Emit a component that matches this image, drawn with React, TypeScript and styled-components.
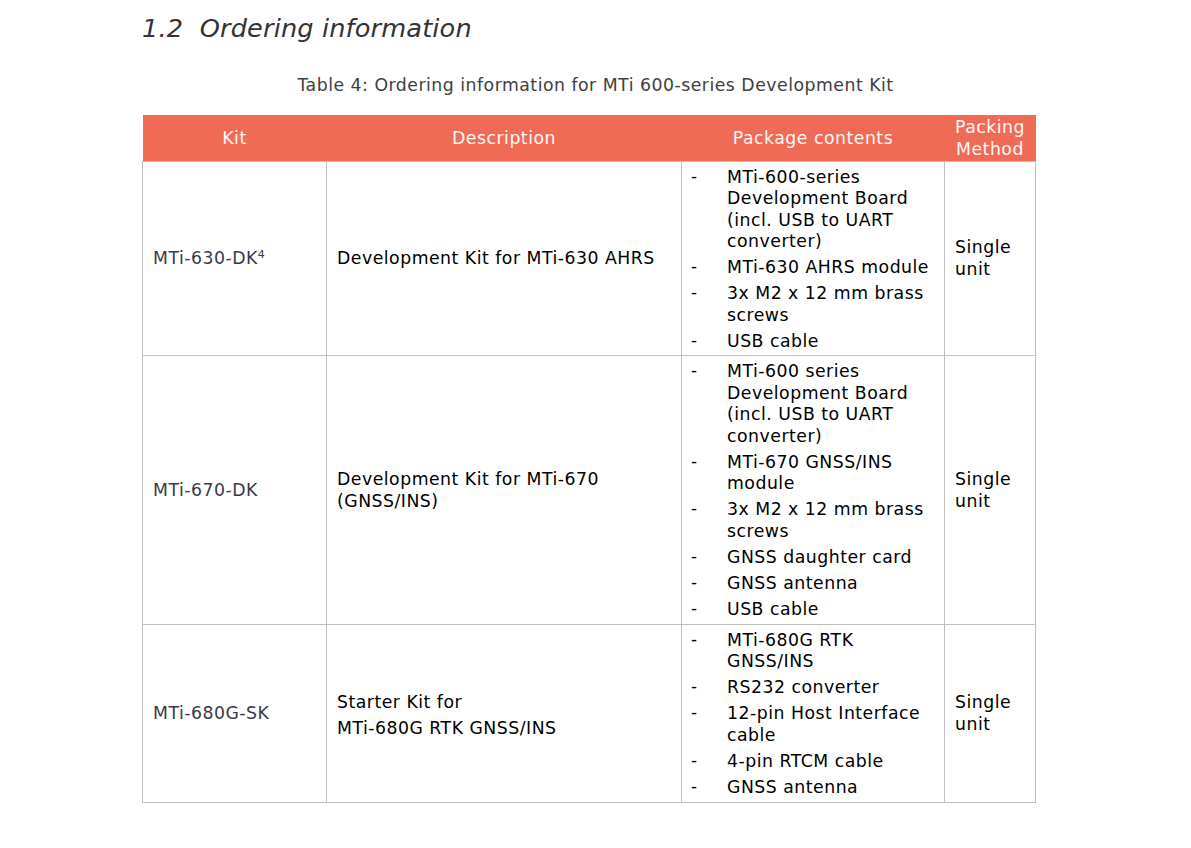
import React from "react";
import styled, { createGlobalStyle } from "styled-components";

const Global = createGlobalStyle`
  html, body { margin: 0; padding: 0; background: #ffffff; }
  body { font-family: "DejaVu Sans", Verdana, sans-serif; color: #000; }
`;

const Page = styled.div`
  width: 1191px;
  height: 848px;
  box-sizing: border-box;
  padding: 10px 0 0 142px;
  display: flex;
  flex-direction: column;
`;

const Heading = styled.h2`
  margin: 0;
  font-family: "DejaVu Sans", Verdana, sans-serif;
  font-style: italic;
  font-weight: normal;
  font-size: 25.6px;
  line-height: 36px;
  color: #333333;
  letter-spacing: 0.15px;
`;

const Caption = styled.div`
  width: 893px;
  margin-top: 28px;
  padding-left: 14px;
  box-sizing: border-box;
  text-align: center;
  font-size: 17.3px;
  letter-spacing: 0.5px;
  line-height: 22px;
  color: #404040;
`;

const Table = styled.table`
  margin-top: 19px;
  width: 894px;
  border-collapse: collapse;
  table-layout: fixed;
  font-size: 17.3px;
  letter-spacing: 0.5px;
  line-height: 21.5px;
`;

const HeadRow = styled.tr`
  background: #ef6b55;
  height: 46px;
`;

const Th = styled.th<{ $w: number }>`
  width: ${(p) => p.$w}px;
  padding: 2px 0 0 0;
  font-weight: normal;
  color: #fff7f5;
  text-align: center;
  vertical-align: middle;
  line-height: 21.5px;
`;

const Td = styled.td<{ $kit?: boolean }>`
  border: 1px solid #c0c0c0;
  padding: 4px 8px 3px 10px;
  vertical-align: middle;
  color: ${(p) => (p.$kit ? "#3a3a48" : "#000")};
`;

const ListCell = styled.td`
  border: 1px solid #c0c0c0;
  padding: 5px 6px 3px 9px;
  vertical-align: middle;
`;

const List = styled.ul`
  margin: 0;
  padding: 0;
  list-style: none;
  display: flex;
  flex-direction: column;
  gap: 4.6px;
`;

const Item = styled.li`
  display: grid;
  grid-template-columns: 36px 1fr;
`;

const Dash = styled.span`
  font-family: "Liberation Sans", sans-serif;
  font-size: 18px;
`;

const Lines = styled.div<{ $multi?: boolean }>`
  display: flex;
  flex-direction: column;
  gap: 4.5px;
  padding-top: ${(p) => (p.$multi ? "4px" : "0")};
`;

const Sup = styled.sup`
  font-size: 11px;
  line-height: 0;
  vertical-align: 6px;
`;

type Row = {
  kit: React.ReactNode;
  desc: string[];
  items: string[];
};

const rows: Row[] = [
  {
    kit: (
      <>
        MTi-630-DK<Sup>4</Sup>
      </>
    ),
    desc: ["Development Kit for MTi-630 AHRS"],
    items: [
      "MTi-600-series Development Board (incl. USB to UART converter)",
      "MTi-630 AHRS module",
      "3x M2 x 12 mm brass screws",
      "USB cable",
    ],
  },
  {
    kit: "MTi-670-DK",
    desc: ["Development Kit for MTi-670 (GNSS/INS)"],
    items: [
      "MTi-600 series Development Board (incl. USB to UART converter)",
      "MTi-670 GNSS/INS module",
      "3x M2 x 12 mm brass screws",
      "GNSS daughter card",
      "GNSS antenna",
      "USB cable",
    ],
  },
  {
    kit: "MTi-680G-SK",
    desc: ["Starter Kit for", "MTi-680G RTK GNSS/INS"],
    items: [
      "MTi-680G RTK GNSS/INS",
      "RS232 converter",
      "12-pin Host Interface cable",
      "4-pin RTCM cable",
      "GNSS antenna",
    ],
  },
];

export default function App() {
  return (
    <>
      <Global />
      <Page>
        <Heading>1.2&nbsp;&nbsp;Ordering information</Heading>
        <Caption>Table 4: Ordering information for MTi 600-series Development Kit</Caption>
        <Table>
          <thead>
            <HeadRow>
              <Th $w={184}>Kit</Th>
              <Th $w={355}>Description</Th>
              <Th $w={263}>Package contents</Th>
              <Th $w={91}>
                Packing
                <br />
                Method
              </Th>
            </HeadRow>
          </thead>
          <tbody>
            {rows.map((r, i) => (
              <tr key={i}>
                <Td $kit>{r.kit}</Td>
                <Td>
                  <Lines $multi={r.desc.length > 1}>
                    {r.desc.map((d, j) => (
                      <span key={j}>{d}</span>
                    ))}
                  </Lines>
                </Td>
                <ListCell>
                  <List>
                    {r.items.map((it, j) => (
                      <Item key={j}>
                        <Dash>-</Dash>
                        <span>{it}</span>
                      </Item>
                    ))}
                  </List>
                </ListCell>
                <Td>
                  Single
                  <br />
                  unit
                </Td>
              </tr>
            ))}
          </tbody>
        </Table>
      </Page>
    </>
  );
}
